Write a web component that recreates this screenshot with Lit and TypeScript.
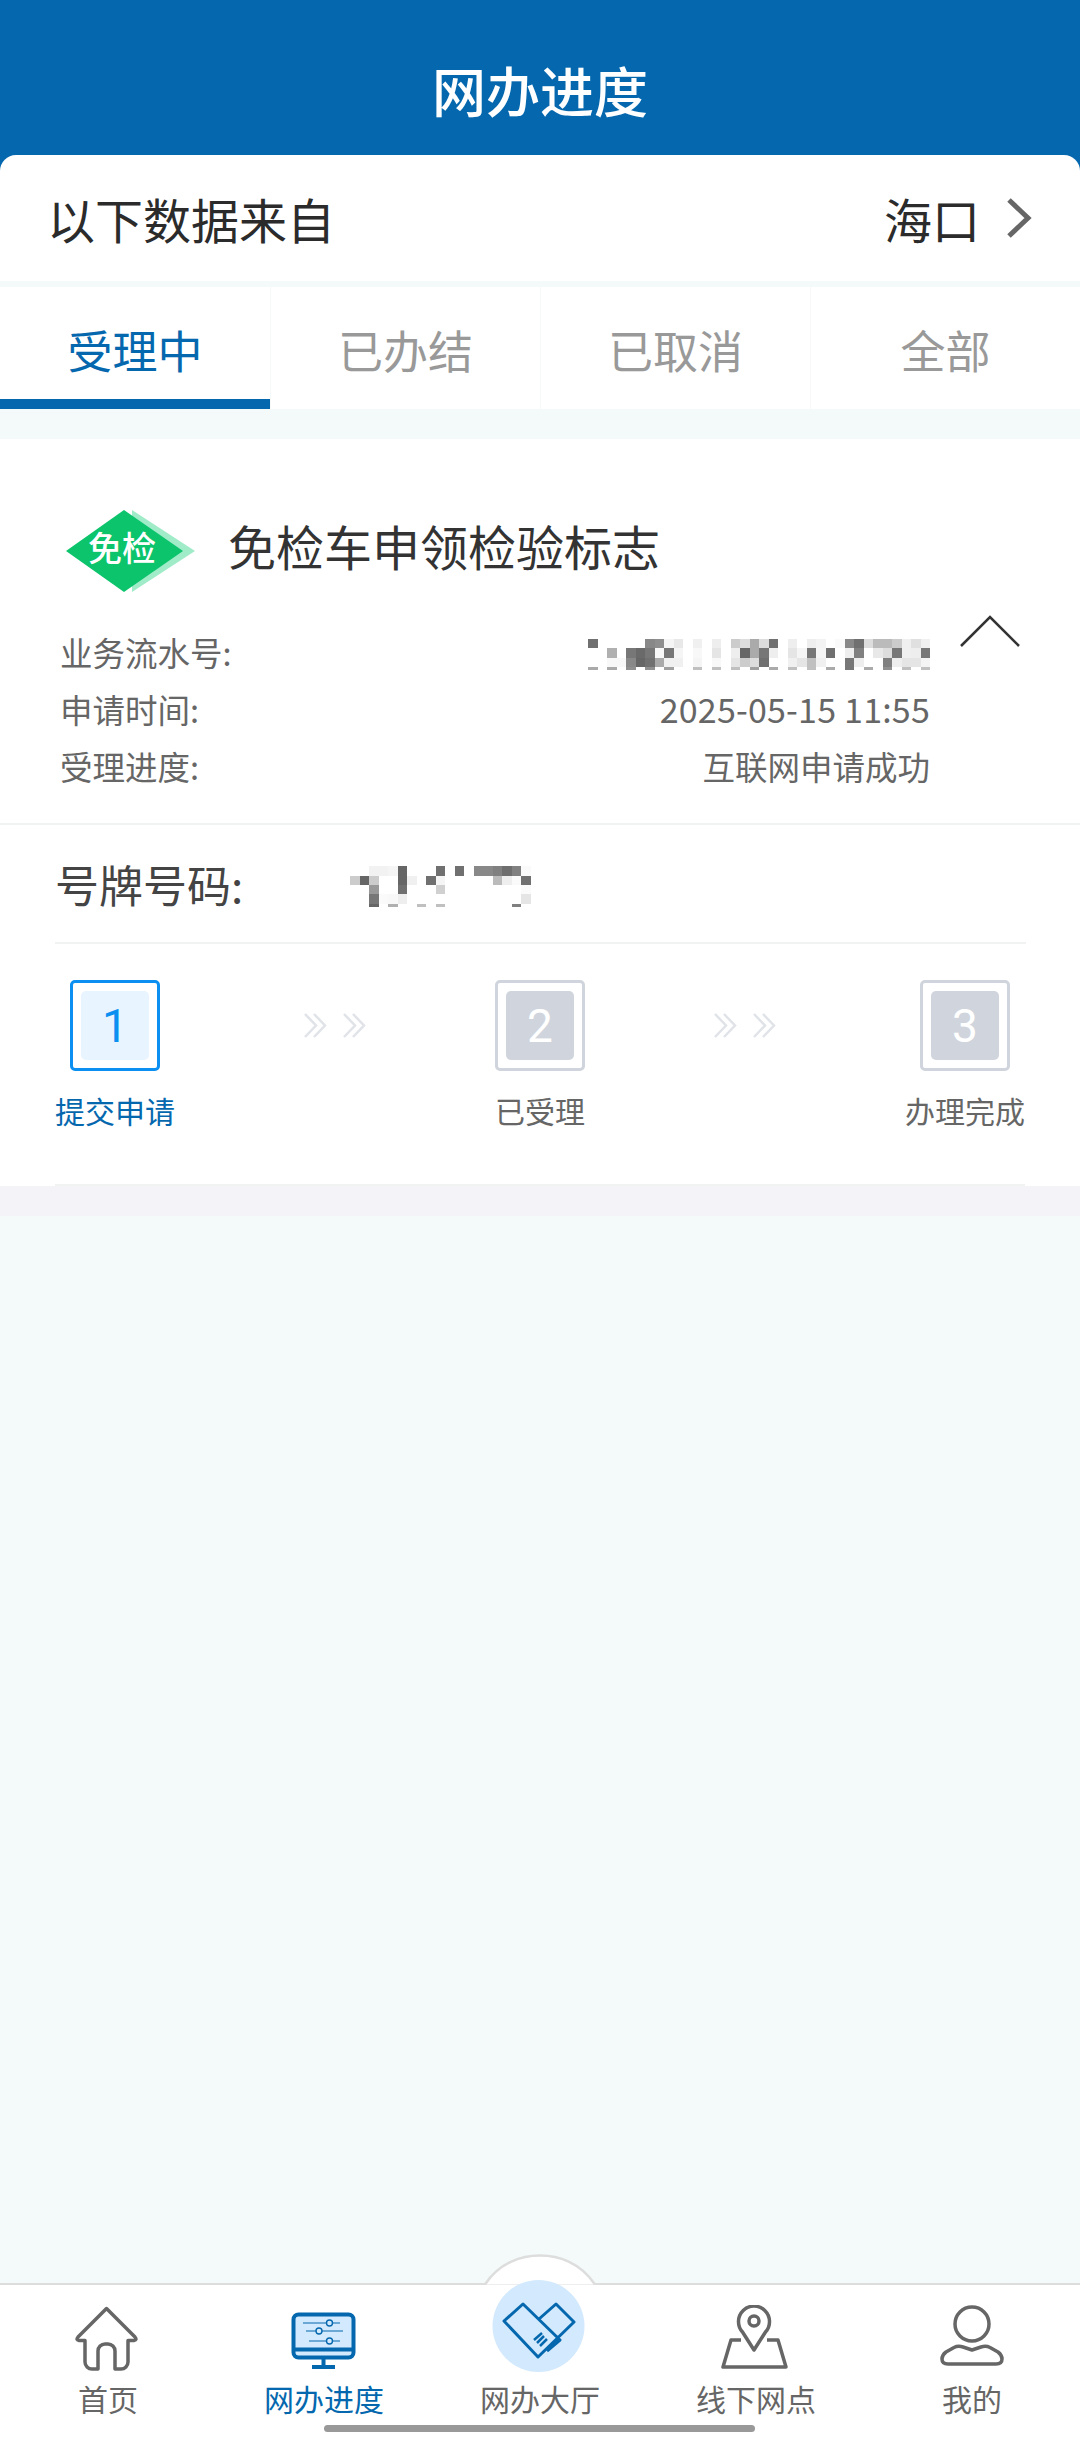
import { LitElement, css, html, svg } from 'lit';
import { customElement, property } from 'lit/decorators.js';

// pixelated masking over personal numbers; each row is a run of grey bytes, ff = paper.
// The last row is only a sliver, the bottoms of the masked characters.
const SERIAL_ROWS = [
  '70 ff ff ff ff ff 88 8f f5 e8 ff f0 ff ee ff cc dd aa dd 70 ff ee ff ee f3 ff fa 88 70 dd bb bb cc f0 e0 f0',
  'ff ff b0 ff 77 6a 77 f8 77 f5 ff f8 ff e5 ff ee 66 aa 77 ee ff e5 f5 77 f5 70 ff ee 80 ff e8 dd 77 f0 ee 77',
  'ff ff f8 f8 88 66 70 aa f0 f0 ff f5 ff f8 ff e5 cc dd 70 ff ff f0 e5 c0 f0 ff ff 77 ee ff ff 80 ee e5 e5 f4',
  'aa ff aa ff 90 ff 90 ff a0 ff ff c0 ff c0 ff c0 ff a0 ff aa ff c0 ff c0 ff aa ff 77 ff aa ff 90 ff c0 ff c0',
];
const PLATE_ROWS = [
  'ff ff f2 f2 f5 66 ff ff ff 70 ff 70 ff 88 88 80 6e 80 fa',
  'cc 66 cc ff ff 66 f0 ff 70 f5 ff ff ff ff ff bb ee fa 70',
  'ff ff 99 ff ff 70 ff ff ff d0 ff ff ff ff ff ff ff ff fa',
  'ff ff 77 fa f8 ee ff ff ff ff ff ff ff ff ff ff ff ff e5',
  'ff ff 66 ff b0 ff ff c0 ff c0 ff ff ff ff ff ff ff 80 ff',
];

@customElement('mosaic-block')
export class MosaicBlock extends LitElement {
  @property({ attribute: false }) rows: string[] = [];

  static styles = css`
    :host {
      display: block;
      margin-top: 6px;
      filter: blur(0.6px);
    }
    .row {
      display: flex;
      height: 9.33px;
    }
    .row:last-child {
      height: 3px;
    }
    .cell {
      flex: none;
      width: 9.5px;
    }
  `;

  render() {
    return this.rows.map(
      (row) => html`<div class="row">
        ${row.split(' ').map((g) => html`<span class="cell" style="background:#${g}${g}${g}"></span>`)}
      </div>`,
    );
  }
}

const homeIcon = svg`<path d="M34.5 3.5 6 32q-2.5 3 1 3.5h6V57a7 7 0 0 0 7 7h6V46a7 7 0 0 1 7-7h3a7 7 0 0 1 7 7v18h6a7 7 0 0 0 7-7V35.5h6q3.5-.5 1-3.5Z"/>`;
const mapIcon = svg`
  <path d="M34 45 22.5 27a15.5 15.5 0 1 1 23 0Z"/>
  <circle cx="34" cy="16" r="5"/>
  <path d="M21 35H11L3 62h63l-8-27H47"/>`;
const userIcon = svg`
  <circle cx="36" cy="19" r="17"/>
  <path d="M6 54q0-4 4-7l8-4.5q4-2 9-.5l9 3 9-3q5-1.5 9 .5l8 4.5q4 3 4 7 0 5-6 5H12q-6 0-6-5Z"/>`;

const TABS = ['受理中', '已办结', '已取消', '全部'];
const STEPS = ['提交申请', '已受理', '办理完成'];

@customElement('app-root')
export class AppRoot extends LitElement {
  static styles = css`
    :host {
      display: flex;
      flex-direction: column;
      position: relative;
      width: 1080px;
      height: 2441px;
      overflow: hidden;
      background: #f4f9f9;
      font-family: 'Noto Sans CJK SC', 'Noto Sans', sans-serif;
      color: #333;
    }
    .top {
      background: #0568ae;
    }
    .title {
      height: 155px;
      padding-top: 24px;
      box-sizing: border-box;
      display: flex;
      align-items: center;
      justify-content: center;
      font-size: 54px;
      font-weight: 500;
      color: #fff;
    }
    .source {
      height: 126px;
      padding: 0 48px 0 47px;
      display: flex;
      align-items: center;
      justify-content: space-between;
      background: #fff;
      border-radius: 16px 16px 0 0;
      font-size: 48px;
      line-height: 64px;
      color: #2b2b2b;
    }
    .city {
      display: flex;
      align-items: center;
      gap: 26px;
    }
    .city svg {
      display: block;
      fill: none;
      stroke: #666;
      stroke-width: 5;
    }
    .tabs {
      display: grid;
      grid-template-columns: repeat(4, 1fr);
      margin-top: 6px;
      background: #fff;
    }
    .tab {
      height: 122px;
      padding-top: 2px;
      box-sizing: border-box;
      display: flex;
      align-items: center;
      justify-content: center;
      font-size: 45px;
      color: #999;
      border-left: 1px solid #f7f8f8;
    }
    .tab:first-child {
      border-left: 0;
    }
    .tab.on {
      color: #0568ae;
      box-shadow: inset 0 -10px 0 #0568ae;
    }
    .card {
      margin-top: 30px;
      background: #fff;
    }
    .head {
      display: flex;
      align-items: center;
      padding: 71px 0 0 64px;
    }
    .badge {
      display: grid;
      place-items: center;
      position: relative;
      flex: none;
      width: 132px;
      height: 82px;
      margin-right: 32px;
      font-size: 34px;
      font-weight: 500;
      color: #fff;
    }
    .badge svg {
      position: absolute;
      inset: 0;
    }
    .badge span {
      position: relative;
      margin: -8px 16px 0 0;
      line-height: 40px;
    }
    .head h2 {
      margin: 0 0 12px;
      font-size: 48px;
      font-weight: 400;
      line-height: 64px;
    }
    .info {
      display: flex;
      align-items: flex-start;
      margin-top: 23px;
      padding-left: 60px;
      border-bottom: 2px solid #f1f3f3;
    }
    .rows {
      flex: 1;
      padding: 8px 0 29px;
    }
    .row {
      display: flex;
      align-items: center;
      justify-content: space-between;
      height: 57px;
      font-size: 32.5px;
      color: #666;
    }
    .stamp {
      font-size: 34px;
      letter-spacing: 0.2px;
    }
    .fold {
      display: block;
      flex: none;
      margin: 0 60px 0 30px;
      fill: none;
      stroke: #333;
      stroke-width: 2.5;
    }
    .plate {
      margin: 0 54px 0 55px;
      height: 119px;
      box-sizing: border-box;
      display: flex;
      align-items: center;
      border-bottom: 2px solid #f1f3f3;
    }
    .plate label {
      width: 295px;
      font-size: 44px;
      color: #444;
    }
    .steps {
      display: flex;
      justify-content: space-between;
      align-items: flex-start;
      margin: 0 55px;
      padding: 36px 0 54px;
      border-bottom: 2px solid #f1f3f3;
    }
    .step {
      display: flex;
      flex-direction: column;
      align-items: center;
      gap: 19px;
      font-size: 30px;
      line-height: 40px;
      color: #666;
    }
    .box {
      display: grid;
      place-items: center;
      width: 90px;
      height: 91px;
      box-sizing: border-box;
      border: 3px solid #d0d4dc;
      border-radius: 5px;
    }
    .box b {
      display: grid;
      place-items: center;
      width: 68px;
      height: 69px;
      border-radius: 5px;
      background: #d0d5dd;
      color: #fff;
      font-size: 46px;
      font-weight: 400;
      font-family: Roboto, sans-serif;
    }
    .step.on {
      color: #0568ae;
    }
    .step.on .box {
      border-color: #0b8ff0;
    }
    .step.on .box b {
      background: #e8f4ff;
      color: #0b8ff0;
    }
    .arrows {
      display: block;
      margin-top: 33px;
      fill: none;
      stroke: #e0e3e8;
      stroke-width: 2.5;
    }
    .strip {
      height: 30px;
      background: #f4f4f8;
    }
    .fill {
      flex: 1;
    }
    nav {
      position: relative;
      display: grid;
      grid-template-columns: repeat(5, 1fr);
      height: 158px;
      padding-top: 20px;
      box-sizing: border-box;
      background: #fff;
      border-top: 2px solid #ddd;
    }
    .hump {
      position: absolute;
      left: 480px;
      top: -33px;
      fill: #fff;
      stroke: #ddd;
      stroke-width: 2.5;
    }
    .item {
      position: relative;
      display: flex;
      flex-direction: column;
      align-items: center;
      gap: 7px;
      font-size: 30px;
      line-height: 40px;
      color: #666;
    }
    .item > svg {
      display: block;
      fill: none;
      stroke: #666;
      stroke-width: 3.5;
      stroke-linejoin: round;
    }
    .item.on {
      color: #0568ae;
    }
    .item .hall {
      position: absolute;
      left: 58px;
      top: -28px;
      stroke: #0568ae;
      stroke-width: 3;
    }
    .item .monitor {
      stroke: #0568ae;
    }
    .spacer {
      height: 66px;
    }
    .home-bar {
      position: absolute;
      left: 324px;
      bottom: 9px;
      width: 431px;
      height: 7px;
      border-radius: 4px;
      background: #999;
    }
  `;

  render() {
    return html`
      <div class="top">
        <div class="title">网办进度</div>
        <div class="source">
          <span>以下数据来自</span>
          <span class="city">海口
            <svg width="26" height="40" viewBox="0 0 26 40"><path d="M3 2 22 20 3 38"/></svg>
          </span>
        </div>
      </div>

      <div class="tabs">
        ${TABS.map((t, i) => html`<div class="tab ${i === 0 ? 'on' : ''}">${t}</div>`)}
      </div>

      <section class="card">
        <div class="head">
          <div class="badge">
            <svg width="132" height="82" viewBox="0 0 132 82">
              <path d="M68 0l63 41-63 41z" fill="#a0ecc9"/>
              <path d="M2 41 60 0l59 41-59 41z" fill="#0bc46c"/>
            </svg>
            <span>免检</span>
          </div>
          <h2>免检车申领检验标志</h2>
        </div>
        <div class="info">
          <div class="rows">
            <div class="row"><span>业务流水号:</span><mosaic-block .rows=${SERIAL_ROWS}></mosaic-block></div>
            <div class="row"><span>申请时间:</span><span class="stamp">2025-05-15 11:55</span></div>
            <div class="row"><span>受理进度:</span><span>互联网申请成功</span></div>
          </div>
          <svg class="fold" width="60" height="32" viewBox="0 0 60 32"><path d="M1 31 30 2l29 29"/></svg>
        </div>
        <div class="plate">
          <label>号牌号码:</label>
          <mosaic-block .rows=${PLATE_ROWS}></mosaic-block>
        </div>
        <div class="steps">
          ${STEPS.map(
            (s, i) => html`
              ${i > 0
                ? html`<svg class="arrows" width="62" height="25" viewBox="0 0 62 25">
                    <path d="M1 1l11 11.5L1 24M10 1l11 11.5L10 24M40 1l11 11.5L40 24M49 1l11 11.5L49 24"/>
                  </svg>`
                : ''}
              <div class="step ${i === 0 ? 'on' : ''}">
                <div class="box"><b>${i + 1}</b></div>
                <span>${s}</span>
              </div>
            `,
          )}
        </div>
      </section>
      <div class="strip"></div>
      <div class="fill"></div>

      <nav>
        <svg class="hump" width="120" height="36" viewBox="0 0 120 36">
          <path d="M5 32.5C20 10 42 3.5 60 3.5s40 6.5 55 29"/>
        </svg>
        <div class="item">
          <svg width="72" height="66" viewBox="0 0 72 66">${homeIcon}</svg>
          <span>首页</span>
        </div>
        <div class="item on">
          <svg class="monitor" width="72" height="66" viewBox="0 0 72 66">
            <rect x="5.5" y="9.5" width="60" height="43" rx="5" fill="#d3e9fd" stroke-width="4"/>
            <path d="M5.5 44.5h60" stroke-width="4"/>
            <path d="M35.5 52.5V61M24 62h23" stroke-width="4"/>
            <path d="M15 18h37M18 26h37M21 36h31" stroke-width="1.2"/>
            <g fill="#d3e9fd" stroke-width="1.4">
              <circle cx="41.5" cy="18" r="3"/>
              <circle cx="31" cy="26" r="3"/>
              <circle cx="41.5" cy="36" r="3"/>
            </g>
          </svg>
          <span>网办进度</span>
        </div>
        <div class="item">
          <div class="spacer"></div>
          <svg class="hall" width="100" height="100" viewBox="0 0 100 100">
            <circle cx="48.5" cy="49" r="46" fill="#d3e9fd" stroke="none"/>
            <path d="M49 42l17-15 18 18-36 35-34-36 19-17 37 36-13 11"/>
            <path d="M44 63l8-7M47 66l7-7M50 69l7-7" stroke-width="2.5"/>
          </svg>
          <span>网办大厅</span>
        </div>
        <div class="item">
          <svg width="72" height="66" viewBox="0 0 72 66">${mapIcon}</svg>
          <span>线下网点</span>
        </div>
        <div class="item">
          <svg width="72" height="66" viewBox="0 0 72 66">${userIcon}</svg>
          <span>我的</span>
        </div>
        <div class="home-bar"></div>
      </nav>
    `;
  }
}
